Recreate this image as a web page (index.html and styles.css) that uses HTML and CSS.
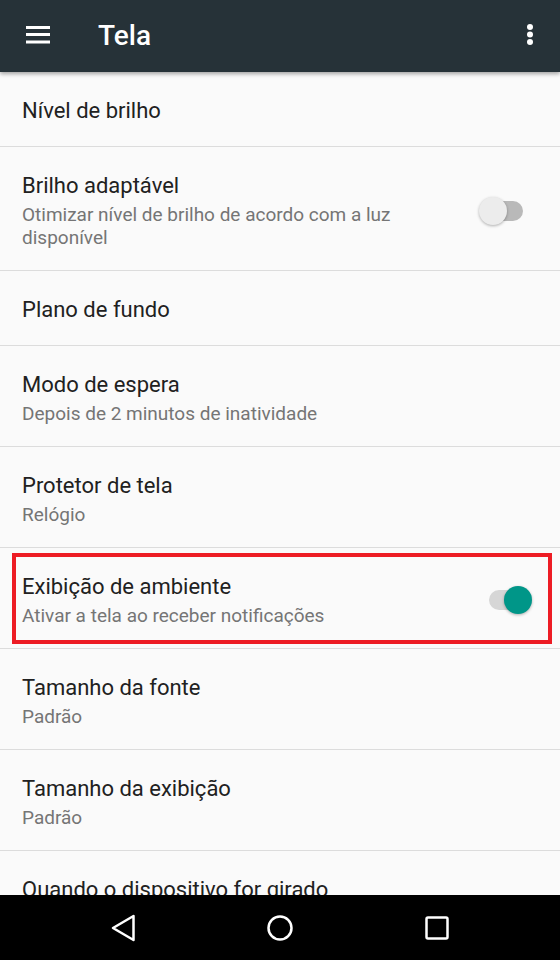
FILE: index.html
```html
<!DOCTYPE html>
<html lang="pt-BR">
<head>
    <meta charset="UTF-8">
    <meta name="viewport" content="width=device-width, initial-scale=1.0">
    <title>Tela</title>
    <link rel="stylesheet" href="styles.css">
</head>
<body>
    <div class="screen">
        <header class="appbar">
            <svg class="menu-icon" width="24" height="24" viewBox="0 0 24 24">
                <rect x="0" y="2" width="24" height="3" fill="#fff"/>
                <rect x="0" y="9" width="24" height="3" fill="#fff"/>
                <rect x="0" y="16.5" width="24" height="3" fill="#fff"/>
            </svg>
            <h1 class="appbar-title">Tela</h1>
            <svg class="more-icon" width="24" height="24" viewBox="0 0 24 24">
                <circle cx="12" cy="3" r="3" fill="#fff"/>
                <circle cx="12" cy="10.5" r="3" fill="#fff"/>
                <circle cx="12" cy="18" r="3" fill="#fff"/>
            </svg>
        </header>

        <main class="list">
            <div class="item">
                <div class="item-text">
                    <div class="item-title">Nível de brilho</div>
                </div>
            </div>
            <div class="item">
                <div class="item-text">
                    <div class="item-title">Brilho adaptável</div>
                    <div class="item-sub">Otimizar nível de brilho de acordo com a luz disponível</div>
                </div>
                <div class="switch"><span class="thumb"></span></div>
            </div>
            <div class="item">
                <div class="item-text">
                    <div class="item-title">Plano de fundo</div>
                </div>
            </div>
            <div class="item">
                <div class="item-text">
                    <div class="item-title">Modo de espera</div>
                    <div class="item-sub">Depois de 2 minutos de inatividade</div>
                </div>
            </div>
            <div class="item">
                <div class="item-text">
                    <div class="item-title">Protetor de tela</div>
                    <div class="item-sub">Relógio</div>
                </div>
            </div>
            <div class="item highlight">
                <div class="item-text">
                    <div class="item-title">Exibição de ambiente</div>
                    <div class="item-sub">Ativar a tela ao receber notificações</div>
                </div>
                <div class="switch on"><span class="thumb"></span></div>
            </div>
            <div class="item">
                <div class="item-text">
                    <div class="item-title">Tamanho da fonte</div>
                    <div class="item-sub">Padrão</div>
                </div>
            </div>
            <div class="item">
                <div class="item-text">
                    <div class="item-title">Tamanho da exibição</div>
                    <div class="item-sub">Padrão</div>
                </div>
            </div>
            <div class="item">
                <div class="item-text">
                    <div class="item-title">Quando o dispositivo for girado</div>
                </div>
            </div>
        </main>

        <nav class="navbar">
            <svg width="40" height="40" viewBox="0 0 40 40">
                <path d="M10 20 L30.5 8 L30.5 32 Z" fill="none" stroke="#fff" stroke-width="2.5" stroke-linejoin="round"/>
            </svg>
            <svg width="40" height="40" viewBox="0 0 40 40">
                <circle cx="20" cy="20" r="11.5" fill="none" stroke="#fff" stroke-width="2.5"/>
            </svg>
            <svg width="40" height="40" viewBox="0 0 40 40">
                <rect x="9.5" y="9.5" width="21" height="21" rx="1.5" fill="none" stroke="#fff" stroke-width="2.5"/>
            </svg>
        </nav>
    </div>
</body>
</html>
```

FILE: styles.css
```css
body {
    margin: 0;
    font-family: Roboto, "Noto Sans", sans-serif;
    background: #fafafa;
}

.screen {
    width: 560px;
    height: 960px;
    display: flex;
    flex-direction: column;
    overflow: hidden;
}

.appbar {
    height: 72px;
    flex-shrink: 0;
    display: flex;
    align-items: center;
    padding: 0 18px 0 26px;
    background-color: #263238;
    box-shadow: 0 2px 4px rgba(0, 0, 0, 0.35);
    position: relative;
    z-index: 1;
}

.appbar-title {
    flex: 1;
    margin: 0 0 2px 48px;
    color: #fff;
    font-size: 28px;
    font-weight: 500;
}

.list {
    flex: 1;
    overflow: hidden;
    background: #fafafa;
}

.item {
    display: flex;
    align-items: center;
    padding: 25px 0 21px 22px;
    border-bottom: 1px solid #dcdcdc;
}

.item-text {
    flex: 1;
    max-width: 440px;
}

.item-title {
    font-size: 22px;
    line-height: 28px;
    color: #212121;
}

.item-sub {
    margin-top: 3px;
    font-size: 19px;
    line-height: 23px;
    color: #757575;
}

.switch {
    position: relative;
    width: 34px;
    height: 20px;
    margin-left: auto;
    margin-right: 37px;
    border-radius: 10px;
    background: #b9b9b9;
}

.thumb {
    position: absolute;
    top: -4px;
    left: -10px;
    width: 28px;
    height: 28px;
    border-radius: 50%;
    background: #ececec;
    box-shadow: 0 1px 3px rgba(0, 0, 0, 0.3);
}

.switch.on {
    background: #d6d6d6;
}

.switch.on .thumb {
    left: 15px;
    background: #009688;
}

.highlight {
    position: relative;
}

.highlight::after {
    content: "";
    position: absolute;
    top: 5px;
    bottom: 4px;
    left: 12px;
    right: 8px;
    border: 4px solid #ed1c24;
}

.navbar {
    height: 65px;
    flex-shrink: 0;
    display: flex;
    align-items: center;
    justify-content: center;
    gap: 117px;
    background: #000;
}
```
